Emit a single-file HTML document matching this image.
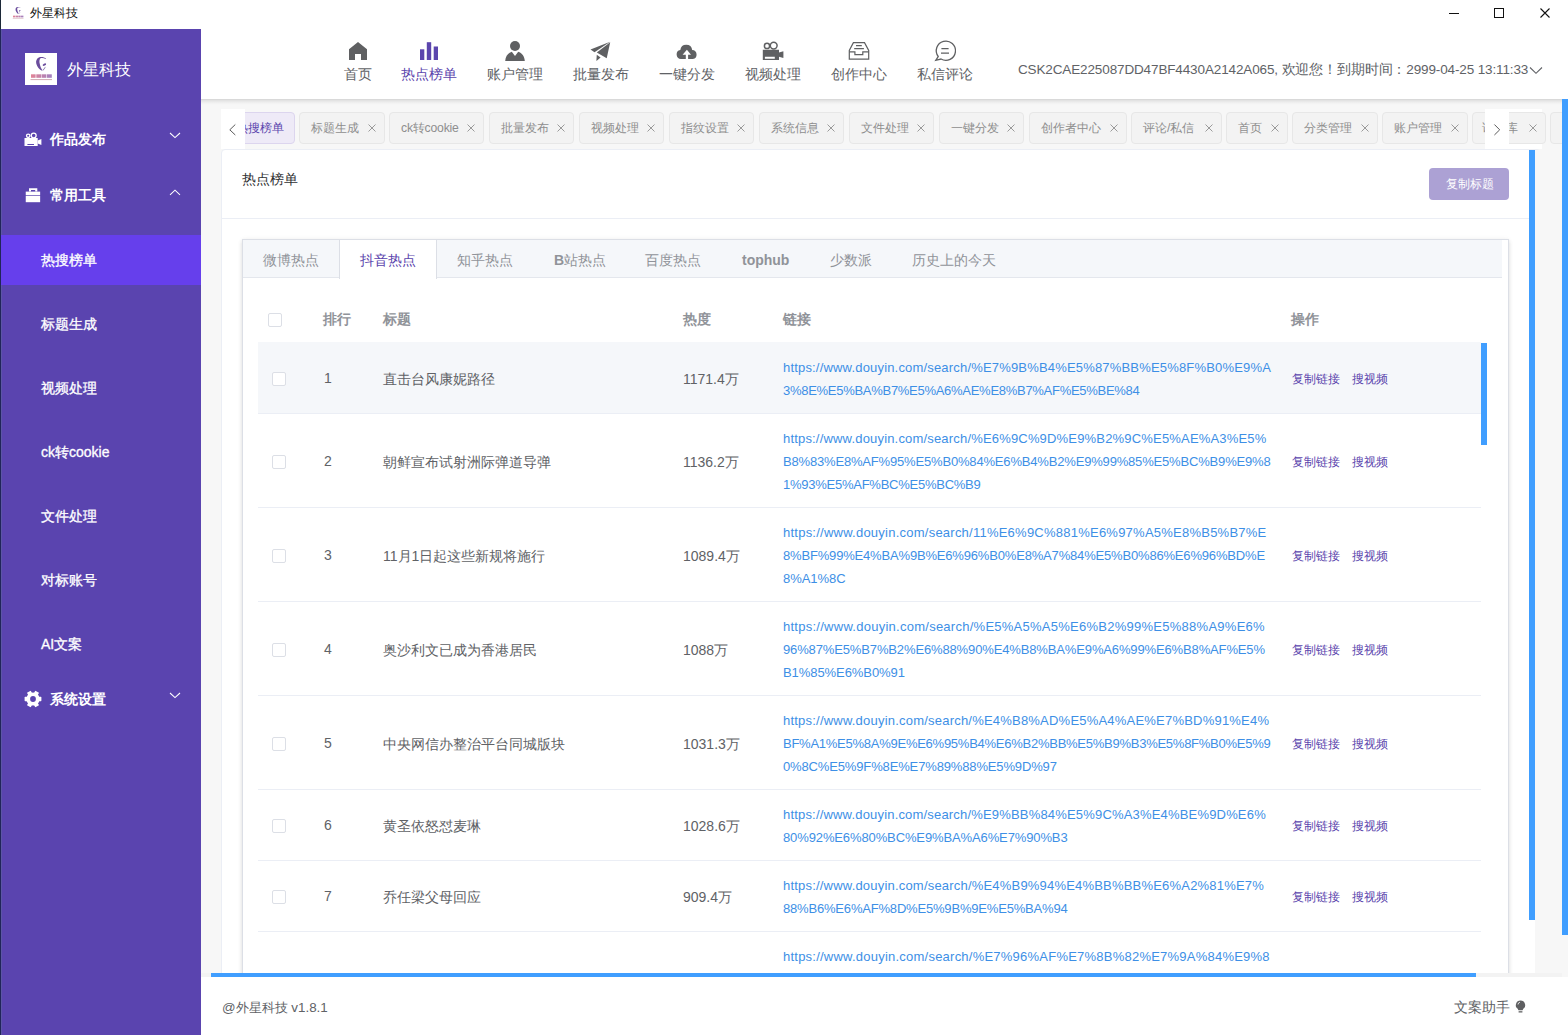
<!DOCTYPE html><html><head><meta charset="utf-8"><style>*{box-sizing:border-box;margin:0;padding:0}
html,body{width:1568px;height:1035px;overflow:hidden;background:#f7f7f7;font-family:"Liberation Sans",sans-serif;position:relative}
.a{position:absolute;white-space:nowrap}
.t12{font-size:12px}
#titlebar{left:0;top:0;width:1568px;height:29px;background:#fff}
#winborder{left:0;top:0;width:1px;height:29px;background:#1c2838}
#sidebar{left:1px;top:29px;width:200px;height:1006px;background:#5a44af}
#header{left:201px;top:29px;width:1367px;height:70px;background:#fff;box-shadow:none}
#footer{left:201px;top:977px;width:1367px;height:58px;background:#fff}
.side-t{color:#fff;font-size:14px;font-weight:bold;line-height:20px}
.side-s{color:#fff;font-size:14px;line-height:20px;font-weight:400;-webkit-text-stroke:0.3px #fff}
.nav{font-size:14px;line-height:20px;text-align:center;width:100px}
#userinfo{left:1018px;top:60px;font-size:13.5px;line-height:20px;color:#606266;letter-spacing:-0.13px}
.chip{top:112px;height:32px;background:#f3f3f3;border:1px solid #e7e7e7;border-radius:4px;font-size:12.2px;line-height:31px;color:#8e8e8e;padding-left:11px}
.chip.act{background:#eeeaf7;border-color:#dcd5ee;color:#5b45ad;padding-left:13px}
.chip .x{position:absolute;right:8px;top:11px}
#card{left:221px;top:149px;width:1320px;height:900px;background:#fff;border:1px solid #ebeef5;border-radius:4px}
#btn{left:1429px;top:168px;width:80px;height:32px;background:#aca1d4;border-radius:4px;color:#fff;font-size:12.2px;text-indent:1px;line-height:32px;text-align:center}
#tabs{left:242px;top:239px;width:1267px;height:800px;background:#fff;border:1px solid #dcdfe6;box-shadow:0 2px 4px rgba(0,0,0,.12),0 0 6px rgba(0,0,0,.04)}
.tab{top:250px;font-size:14px;line-height:20px}
.th{top:309px;font-size:14px;line-height:20px;font-weight:bold;color:#909399}
.td{font-size:14px;line-height:20px;color:#606266}
.link{font-size:13px;line-height:20px;color:#3d8fe6}
.op{font-size:12px;line-height:20px;color:#5b45ad}
.cb{width:14px;height:14px;border:1px solid #dcdfe6;border-radius:2px;background:#fff}
.sb{background:#409eff}
</style></head><body>
<div class="a" id="titlebar"></div>
<svg class="a" style="left:9.6px;top:5.4px" width="16" height="16" viewBox="0 0 32 32">
<defs><linearGradient id="lg2" gradientUnits="userSpaceOnUse" x1="6" y1="0" x2="27" y2="0"><stop offset="0" stop-color="#d5506a"/><stop offset="1" stop-color="#7a4aa5"/></linearGradient></defs>
<path d="M14.3 4.2 C17 3.6 19.5 4.2 21.2 5.8 L20.6 6 C18.8 5 16.5 4.8 15.2 5.5 C14.2 6.8 14.3 9 14.8 11 C15.3 13.3 16 15.3 17 16.4 L16.8 17.8 C14.3 16.5 12.2 13.8 11.3 10.8 C10.6 8 11.6 5.3 14.3 4.2 Z" fill="#6a4c9c"/>
<path d="M20.6 13.9 C20 15.6 18.9 17 17.5 17.7 L17.3 17.2 C18.5 16.3 19.5 15.1 20.1 13.8 Z" fill="#8a78b0"/>
<ellipse cx="19.4" cy="11.6" rx="1.9" ry="1" transform="rotate(-28 19.4 11.6)" fill="#6a4c9c"/>
<rect x="6" y="21.3" width="4.6" height="3.5" fill="url(#lg2)" opacity=".7"/><rect x="11.3" y="21.3" width="4.8" height="3.5" fill="url(#lg2)" opacity=".7"/><rect x="16.6" y="21.3" width="4.8" height="3.5" fill="url(#lg2)" opacity=".7"/><rect x="22" y="21.3" width="4.8" height="3.5" fill="url(#lg2)" opacity=".7"/>
<rect x="5.5" y="26" width="21.5" height="1.1" fill="#b07080" opacity=".55"/></svg>
<div class="a t12" style="left:30px;top:3px;color:#111;line-height:20px">外星科技</div>
<div class="a" style="left:1449px;top:13px;width:10px;height:1px;background:#111"></div>
<div class="a" style="left:1494px;top:8px;width:10px;height:10px;border:1px solid #111"></div>
<svg class="a" style="left:1539px;top:7px" width="13" height="13" viewBox="0 0 13 13"><path d="M1.5 1.5L10.5 10.5M10.5 1.5L1.5 10.5" stroke="#111" stroke-width="1.1"/></svg>
<div class="a" id="sidebar"></div>
<div class="a" id="winborder"></div>
<div class="a" style="left:0;top:29px;width:1px;height:1006px;background:#212559"></div>
<div class="a" style="left:1px;top:29px;width:1px;height:1006px;background:#5c56a6"></div>
<div class="a" style="left:25px;top:53px;width:32px;height:32px;background:#fff"></div>
<svg class="a" style="left:25px;top:53px" width="32" height="32" viewBox="0 0 32 32">
<defs><linearGradient id="lg" gradientUnits="userSpaceOnUse" x1="6" y1="0" x2="27" y2="0"><stop offset="0" stop-color="#d5506a"/><stop offset="1" stop-color="#7a4aa5"/></linearGradient></defs>
<path d="M14.3 4.2 C17 3.6 19.5 4.2 21.2 5.8 L20.6 6 C18.8 5 16.5 4.8 15.2 5.5 C14.2 6.8 14.3 9 14.8 11 C15.3 13.3 16 15.3 17 16.4 L16.8 17.8 C14.3 16.5 12.2 13.8 11.3 10.8 C10.6 8 11.6 5.3 14.3 4.2 Z" fill="#6a4c9c"/>
<path d="M20.6 13.9 C20 15.6 18.9 17 17.5 17.7 L17.3 17.2 C18.5 16.3 19.5 15.1 20.1 13.8 Z" fill="#8a78b0"/>
<ellipse cx="19.4" cy="11.6" rx="1.9" ry="1" transform="rotate(-28 19.4 11.6)" fill="#6a4c9c"/>
<rect x="6" y="21.3" width="4.6" height="3.5" fill="url(#lg)" opacity=".7"/><rect x="11.3" y="21.3" width="4.8" height="3.5" fill="url(#lg)" opacity=".7"/><rect x="16.6" y="21.3" width="4.8" height="3.5" fill="url(#lg)" opacity=".7"/><rect x="22" y="21.3" width="4.8" height="3.5" fill="url(#lg)" opacity=".7"/>
<rect x="5.5" y="26" width="21.5" height="1.1" fill="#b07080" opacity=".55"/></svg>
<div class="a" style="left:67px;top:59px;font-size:16px;line-height:20px;color:#fff;margin-top:1px">外星科技</div>
<svg class="a" style="left:0;top:0" width="50" height="210" viewBox="0 0 50 210">
<circle cx="28.2" cy="135.8" r="1.7" fill="none" stroke="#fff" stroke-width="1.3"/><circle cx="33.7" cy="135.5" r="2.45" fill="none" stroke="#fff" stroke-width="1.3"/>
<path fill="#fff" fill-rule="evenodd" d="M24.5 138.1 H37.7 V146 H24.5 Z M27.4 144 V145 H34 V144 Z"/><path d="M37.7 140.5 L41.4 139 V145 L37.7 143.5 Z" fill="#fff"/>
<path fill="#fff" fill-rule="evenodd" d="M29 188.3 H37.3 V191.6 H35.2 V190 H31 V191.6 H29 Z"/><rect x="25.75" y="191.6" width="14.4" height="3.7" fill="#fff"/><rect x="25.75" y="196" width="14.4" height="6.2" fill="#fff"/>
</svg>
<div class="a side-t" style="left:50px;top:129px">作品发布</div>
<svg class="a" style="left:169px;top:131px" width="12" height="8" viewBox="0 0 12 8"><path d="M1 2 L6 6.6 L11 2" fill="none" stroke="#fff" stroke-width="1.05"/></svg>
<div class="a side-t" style="left:50px;top:185px">常用工具</div>
<svg class="a" style="left:169px;top:188px" width="12" height="8" viewBox="0 0 12 8"><path d="M1 6.8 L6 2.2 L11 6.8" fill="none" stroke="#fff" stroke-width="1.05"/></svg>
<div class="a" style="left:1px;top:235px;width:200px;height:50px;background:#663fec"></div>
<div class="a side-s" style="left:41px;top:250px">热搜榜单</div>
<div class="a side-s" style="left:41px;top:314px">标题生成</div>
<div class="a side-s" style="left:41px;top:378px">视频处理</div>
<div class="a side-s" style="left:41px;top:442px">ck转cookie</div>
<div class="a side-s" style="left:41px;top:506px">文件处理</div>
<div class="a side-s" style="left:41px;top:570px">对标账号</div>
<div class="a side-s" style="left:41px;top:634px">AI文案</div>
<svg class="a" style="left:23px;top:689px" width="20" height="20" viewBox="-10 -10 20 20"><g transform="translate(0 0)" fill="#fff">
<circle r="6.6"/><rect x="-8.4" y="-2.2" width="16.8" height="4.4" rx="0.6"/><rect x="-8.4" y="-2.2" width="16.8" height="4.4" rx="0.6" transform="rotate(60)"/><rect x="-8.4" y="-2.2" width="16.8" height="4.4" rx="0.6" transform="rotate(120)"/></g>
<circle r="2.9" fill="#5a44af"/></svg>
<div class="a side-t" style="left:50px;top:689px">系统设置</div>
<svg class="a" style="left:169px;top:691px" width="12" height="8" viewBox="0 0 12 8"><path d="M1 2 L6 6.6 L11 2" fill="none" stroke="#fff" stroke-width="1.05"/></svg>
<div class="a" id="header"></div>
<div class="a" style="left:201px;top:99px;width:1367px;height:6px;background:linear-gradient(to bottom,rgba(0,0,0,.14),rgba(0,0,0,.07) 30%,rgba(0,0,0,.02) 70%,rgba(0,0,0,0))"></div>
<svg class="a" style="left:0;top:0" width="1000" height="70"><path d="M349 49.3 L358 42 L367 49.3 V60 H361 V54 H355 V60 H349 Z" fill="#5f6062"/><rect x="420" y="49.3" width="4.3" height="10.7" fill="#5b45ad"/><rect x="426.8" y="42.2" width="4.4" height="17.8" fill="#5b45ad"/><rect x="433.7" y="46.5" width="4.3" height="13.5" fill="#5b45ad"/><circle cx="515" cy="46" r="5" fill="#5f6062"/><path d="M505.2 61 C505.5 56 508 53 511.8 51.7 L515 56 L518.2 51.7 C522 53 524.5 56 524.8 61 Z" fill="#5f6062"/><path d="M590.5 49.4 L610.2 41.8 L594.5 52.2 Z" fill="#5f6062"/><path d="M596.8 52.4 L610.2 42.3 L606.7 58.2 Z" fill="#5f6062"/><path d="M596.8 54.7 L600.6 57.4 L596.4 61 Z" fill="#5f6062"/><path fill="#5f6062" d="M685.8 59 H681 A4.6 4.6 0 0 1 680.3 49.9 A6 6 0 0 1 692.2 49.9 A4.6 4.6 0 0 1 692.9 59 H688.1 V54.7 H691 L686.9 49.8 L682.6 54.7 H685.8 Z"/><circle cx="767" cy="45.9" r="2.6" fill="none" stroke="#5f6062" stroke-width="1.5"/><circle cx="773.7" cy="45.6" r="3.4" fill="none" stroke="#5f6062" stroke-width="1.5"/><path fill="#5f6062" fill-rule="evenodd" d="M762.8 49.8 H779 V60 H762.8 Z M764.9 56.8 V58.8 H774.8 V56.8 Z"/><path d="M779 52.4 L783.4 51.3 V58 L779 56.7 Z" fill="#5f6062"/><g fill="none" stroke="#5f6062" stroke-width="1.2"><path d="M853.4 42.6 H864.5 L868.7 50.5 V59.2 H849.3 V50.5 Z"/><path d="M849.3 51.8 H854.9 V54.7 H862.8 V51.8 H868.7"/><path d="M856 45.7 H861.8 M854.2 48.6 H863.9"/></g><g fill="none" stroke="#5f6062" stroke-width="1.3"><path d="M938.2 56.5 A9.6 9.6 0 1 1 941 59 L935.8 60.3 Z"/><path d="M941.4 48.6 H948.6 M941 53.2 H949"/></g></svg>
<div class="a nav" style="left:308px;top:64px;color:#606266">首页</div>
<div class="a nav" style="left:379px;top:64px;color:#5b45ad">热点榜单</div>
<div class="a nav" style="left:465px;top:64px;color:#606266">账户管理</div>
<div class="a nav" style="left:551px;top:64px;color:#606266">批量发布</div>
<div class="a nav" style="left:637px;top:64px;color:#606266">一键分发</div>
<div class="a nav" style="left:723px;top:64px;color:#606266">视频处理</div>
<div class="a nav" style="left:809px;top:64px;color:#606266">创作中心</div>
<div class="a nav" style="left:895px;top:64px;color:#606266">私信评论</div>
<div class="a" id="userinfo">CSK2CAE225087DD47BF4430A2142A065, 欢迎您！到期时间：2999-04-25 13:11:33</div>
<svg class="a" style="left:1529px;top:66px" width="14" height="9" viewBox="0 0 14 9"><path d="M1 1.5 L7 7.3 L13 1.5" fill="none" stroke="#606266" stroke-width="1.1"/></svg>
<div class="a" style="left:1485px;top:109px;width:57px;height:40px;background:#fff"></div>
<div class="a chip act" style="left:222px;width:73px"><span style="">热搜榜单</span></div>
<div class="a chip" style="left:299px;width:86px"><span style="">标题生成</span><svg class="x" width="8" height="8" viewBox="0 0 8 8"><path d="M0.5 0.5L7.5 7.5M7.5 0.5L0.5 7.5" stroke="#9a9a9a" stroke-width="1"/></svg></div>
<div class="a chip" style="left:389px;width:95px"><span style="letter-spacing:-0.2px">ck转cookie</span><svg class="x" width="8" height="8" viewBox="0 0 8 8"><path d="M0.5 0.5L7.5 7.5M7.5 0.5L0.5 7.5" stroke="#9a9a9a" stroke-width="1"/></svg></div>
<div class="a chip" style="left:489px;width:85px"><span style="">批量发布</span><svg class="x" width="8" height="8" viewBox="0 0 8 8"><path d="M0.5 0.5L7.5 7.5M7.5 0.5L0.5 7.5" stroke="#9a9a9a" stroke-width="1"/></svg></div>
<div class="a chip" style="left:579px;width:85px"><span style="">视频处理</span><svg class="x" width="8" height="8" viewBox="0 0 8 8"><path d="M0.5 0.5L7.5 7.5M7.5 0.5L0.5 7.5" stroke="#9a9a9a" stroke-width="1"/></svg></div>
<div class="a chip" style="left:669px;width:85px"><span style="">指纹设置</span><svg class="x" width="8" height="8" viewBox="0 0 8 8"><path d="M0.5 0.5L7.5 7.5M7.5 0.5L0.5 7.5" stroke="#9a9a9a" stroke-width="1"/></svg></div>
<div class="a chip" style="left:759px;width:85px"><span style="">系统信息</span><svg class="x" width="8" height="8" viewBox="0 0 8 8"><path d="M0.5 0.5L7.5 7.5M7.5 0.5L0.5 7.5" stroke="#9a9a9a" stroke-width="1"/></svg></div>
<div class="a chip" style="left:849px;width:85px"><span style="">文件处理</span><svg class="x" width="8" height="8" viewBox="0 0 8 8"><path d="M0.5 0.5L7.5 7.5M7.5 0.5L0.5 7.5" stroke="#9a9a9a" stroke-width="1"/></svg></div>
<div class="a chip" style="left:939px;width:85px"><span style="">一键分发</span><svg class="x" width="8" height="8" viewBox="0 0 8 8"><path d="M0.5 0.5L7.5 7.5M7.5 0.5L0.5 7.5" stroke="#9a9a9a" stroke-width="1"/></svg></div>
<div class="a chip" style="left:1029px;width:98px"><span style="">创作者中心</span><svg class="x" width="8" height="8" viewBox="0 0 8 8"><path d="M0.5 0.5L7.5 7.5M7.5 0.5L0.5 7.5" stroke="#9a9a9a" stroke-width="1"/></svg></div>
<div class="a chip" style="left:1131px;width:91px"><span style="">评论/私信</span><svg class="x" width="8" height="8" viewBox="0 0 8 8"><path d="M0.5 0.5L7.5 7.5M7.5 0.5L0.5 7.5" stroke="#9a9a9a" stroke-width="1"/></svg></div>
<div class="a chip" style="left:1226px;width:62px"><span style="">首页</span><svg class="x" width="8" height="8" viewBox="0 0 8 8"><path d="M0.5 0.5L7.5 7.5M7.5 0.5L0.5 7.5" stroke="#9a9a9a" stroke-width="1"/></svg></div>
<div class="a chip" style="left:1292px;width:86px"><span style="">分类管理</span><svg class="x" width="8" height="8" viewBox="0 0 8 8"><path d="M0.5 0.5L7.5 7.5M7.5 0.5L0.5 7.5" stroke="#9a9a9a" stroke-width="1"/></svg></div>
<div class="a chip" style="left:1382px;width:86px"><span style="">账户管理</span><svg class="x" width="8" height="8" viewBox="0 0 8 8"><path d="M0.5 0.5L7.5 7.5M7.5 0.5L0.5 7.5" stroke="#9a9a9a" stroke-width="1"/></svg></div>
<div class="a chip" style="left:1472px;width:74px"><span style="margin-left:-2px">话术库</span><svg class="x" width="8" height="8" viewBox="0 0 8 8"><path d="M0.5 0.5L7.5 7.5M7.5 0.5L0.5 7.5" stroke="#9a9a9a" stroke-width="1"/></svg></div>
<div class="a chip" style="left:1550px;width:73px"><span style="">素材库</span><svg class="x" width="8" height="8" viewBox="0 0 8 8"><path d="M0.5 0.5L7.5 7.5M7.5 0.5L0.5 7.5" stroke="#9a9a9a" stroke-width="1"/></svg></div>
<div class="a" style="left:221px;top:109px;width:24px;height:40px;background:#fff"></div>
<svg class="a" style="left:227px;top:123px" width="10" height="14" viewBox="0 0 10 14"><path d="M8.3 1.5 L2.8 6.8 L8.3 12" fill="none" stroke="#5a5a5a" stroke-width="1"/></svg>
<div class="a" style="left:1485px;top:109px;width:24px;height:40px;background:#fff"></div>
<svg class="a" style="left:1491px;top:123px" width="10" height="14" viewBox="0 0 10 14"><path d="M3.4 1.5 L8.7 6.8 L3.4 12" fill="none" stroke="#5a5a5a" stroke-width="1"/></svg>
<div class="a" id="card"></div>
<div class="a" style="left:242px;top:169px;font-size:14px;line-height:20px;color:#303133">热点榜单</div>
<div class="a" style="left:222px;top:218px;width:1307px;height:1px;background:#ebeef5"></div>
<div class="a" id="btn">复制标题</div>
<div class="a" id="tabs"></div>
<div class="a" style="left:243px;top:240px;width:1259px;height:38px;background:#f5f7fa;border-bottom:1px solid #e4e7ed"></div>
<div class="a tab" style="left:263px;color:#909399;font-weight:normal">微博热点</div>
<div class="a" style="left:339px;top:240px;width:98px;height:39px;background:#fff;border-left:1px solid #dcdfe6;border-right:1px solid #dcdfe6"></div>
<div class="a tab" style="left:360px;color:#5b45ad;font-weight:normal">抖音热点</div>
<div class="a tab" style="left:457px;color:#909399;font-weight:normal">知乎热点</div>
<div class="a tab" style="left:554px;color:#909399;font-weight:normal"><b>B</b>站热点</div>
<div class="a tab" style="left:645px;color:#909399;font-weight:normal">百度热点</div>
<div class="a tab" style="left:742px;color:#909399;font-weight:bold">tophub</div>
<div class="a tab" style="left:830px;color:#909399;font-weight:normal">少数派</div>
<div class="a tab" style="left:912px;color:#909399;font-weight:normal">历史上的今天</div>
<div class="a cb" style="left:268px;top:313px"></div>
<div class="a th" style="left:323px">排行</div>
<div class="a th" style="left:383px">标题</div>
<div class="a th" style="left:683px">热度</div>
<div class="a th" style="left:783px">链接</div>
<div class="a th" style="left:1291px">操作</div>
<div class="a" style="left:258px;top:342px;width:1223px;height:71px;background:#f5f7fa"></div>
<div class="a" style="left:258px;top:413px;width:1223px;height:1px;background:#ebeef5"></div>
<div class="a link" style="left:783px;top:358px;margin-top:0px;letter-spacing:0.179px">https://www.douyin.com/search/%E7%9B%B4%E5%87%BB%E5%8F%B0%E9%A</div>
<div class="a link" style="left:783px;top:358px;margin-top:23px;letter-spacing:-0.283px">3%8E%E5%BA%B7%E5%A6%AE%E8%B7%AF%E5%BE%84</div>
<div class="a cb" style="left:272px;top:372px"></div>
<div class="a td" style="left:324px;top:368px">1</div>
<div class="a td" style="left:383px;top:369px">直击台风康妮路径</div>
<div class="a td" style="left:683px;top:369px">1171.4万</div>
<div class="a op" style="left:1292px;top:369px">复制链接</div>
<div class="a op" style="left:1352px;top:369px">搜视频</div>
<div class="a" style="left:258px;top:507px;width:1223px;height:1px;background:#ebeef5"></div>
<div class="a link" style="left:783px;top:429px;margin-top:0px;letter-spacing:0.179px">https://www.douyin.com/search/%E6%9C%9D%E9%B2%9C%E5%AE%A3%E5%</div>
<div class="a link" style="left:783px;top:429px;margin-top:23px;letter-spacing:-0.176px">B8%83%E8%AF%95%E5%B0%84%E6%B4%B2%E9%99%85%E5%BC%B9%E9%8</div>
<div class="a link" style="left:783px;top:429px;margin-top:46px;letter-spacing:-0.252px">1%93%E5%AF%BC%E5%BC%B9</div>
<div class="a cb" style="left:272px;top:455px"></div>
<div class="a td" style="left:324px;top:451px">2</div>
<div class="a td" style="left:383px;top:452px">朝鲜宣布试射洲际弹道导弹</div>
<div class="a td" style="left:683px;top:452px">1136.2万</div>
<div class="a op" style="left:1292px;top:452px">复制链接</div>
<div class="a op" style="left:1352px;top:452px">搜视频</div>
<div class="a" style="left:258px;top:601px;width:1223px;height:1px;background:#ebeef5"></div>
<div class="a link" style="left:783px;top:523px;margin-top:0px;letter-spacing:0.238px">https://www.douyin.com/search/11%E6%9C%881%E6%97%A5%E8%B5%B7%E</div>
<div class="a link" style="left:783px;top:523px;margin-top:23px;letter-spacing:-0.176px">8%BF%99%E4%BA%9B%E6%96%B0%E8%A7%84%E5%B0%86%E6%96%BD%E</div>
<div class="a link" style="left:783px;top:523px;margin-top:46px;letter-spacing:-0.054px">8%A1%8C</div>
<div class="a cb" style="left:272px;top:549px"></div>
<div class="a td" style="left:324px;top:545px">3</div>
<div class="a td" style="left:383px;top:546px">11月1日起这些新规将施行</div>
<div class="a td" style="left:683px;top:546px">1089.4万</div>
<div class="a op" style="left:1292px;top:546px">复制链接</div>
<div class="a op" style="left:1352px;top:546px">搜视频</div>
<div class="a" style="left:258px;top:695px;width:1223px;height:1px;background:#ebeef5"></div>
<div class="a link" style="left:783px;top:617px;margin-top:0px;letter-spacing:0.259px">https://www.douyin.com/search/%E5%A5%A5%E6%B2%99%E5%88%A9%E6%</div>
<div class="a link" style="left:783px;top:617px;margin-top:23px;letter-spacing:-0.136px">96%87%E5%B7%B2%E6%88%90%E4%B8%BA%E9%A6%99%E6%B8%AF%E5%</div>
<div class="a link" style="left:783px;top:617px;margin-top:46px;letter-spacing:-0.069px">B1%85%E6%B0%91</div>
<div class="a cb" style="left:272px;top:643px"></div>
<div class="a td" style="left:324px;top:639px">4</div>
<div class="a td" style="left:383px;top:640px">奥沙利文已成为香港居民</div>
<div class="a td" style="left:683px;top:640px">1088万</div>
<div class="a op" style="left:1292px;top:640px">复制链接</div>
<div class="a op" style="left:1352px;top:640px">搜视频</div>
<div class="a" style="left:258px;top:789px;width:1223px;height:1px;background:#ebeef5"></div>
<div class="a link" style="left:783px;top:711px;margin-top:0px;letter-spacing:0.212px">https://www.douyin.com/search/%E4%B8%AD%E5%A4%AE%E7%BD%91%E4%</div>
<div class="a link" style="left:783px;top:711px;margin-top:23px;letter-spacing:-0.255px">BF%A1%E5%8A%9E%E6%95%B4%E6%B2%BB%E5%B9%B3%E5%8F%B0%E5%9</div>
<div class="a link" style="left:783px;top:711px;margin-top:46px;letter-spacing:-0.143px">0%8C%E5%9F%8E%E7%89%88%E5%9D%97</div>
<div class="a cb" style="left:272px;top:737px"></div>
<div class="a td" style="left:324px;top:733px">5</div>
<div class="a td" style="left:383px;top:734px">中央网信办整治平台同城版块</div>
<div class="a td" style="left:683px;top:734px">1031.3万</div>
<div class="a op" style="left:1292px;top:734px">复制链接</div>
<div class="a op" style="left:1352px;top:734px">搜视频</div>
<div class="a" style="left:258px;top:860px;width:1223px;height:1px;background:#ebeef5"></div>
<div class="a link" style="left:783px;top:805px;margin-top:0px;letter-spacing:0.181px">https://www.douyin.com/search/%E9%BB%84%E5%9C%A3%E4%BE%9D%E6%</div>
<div class="a link" style="left:783px;top:805px;margin-top:23px;letter-spacing:-0.120px">80%92%E6%80%BC%E9%BA%A6%E7%90%B3</div>
<div class="a cb" style="left:272px;top:819px"></div>
<div class="a td" style="left:324px;top:815px">6</div>
<div class="a td" style="left:383px;top:816px">黄圣依怒怼麦琳</div>
<div class="a td" style="left:683px;top:816px">1028.6万</div>
<div class="a op" style="left:1292px;top:816px">复制链接</div>
<div class="a op" style="left:1352px;top:816px">搜视频</div>
<div class="a" style="left:258px;top:931px;width:1223px;height:1px;background:#ebeef5"></div>
<div class="a link" style="left:783px;top:876px;margin-top:0px;letter-spacing:0.197px">https://www.douyin.com/search/%E4%B9%94%E4%BB%BB%E6%A2%81%E7%</div>
<div class="a link" style="left:783px;top:876px;margin-top:23px;letter-spacing:-0.188px">88%B6%E6%AF%8D%E5%9B%9E%E5%BA%94</div>
<div class="a cb" style="left:272px;top:890px"></div>
<div class="a td" style="left:324px;top:886px">7</div>
<div class="a td" style="left:383px;top:887px">乔任梁父母回应</div>
<div class="a td" style="left:683px;top:887px">909.4万</div>
<div class="a op" style="left:1292px;top:887px">复制链接</div>
<div class="a op" style="left:1352px;top:887px">搜视频</div>
<div class="a" style="left:258px;top:1030px;width:1223px;height:1px;background:#ebeef5"></div>
<div class="a link" style="left:783px;top:947px;margin-top:0px;letter-spacing:0.229px">https://www.douyin.com/search/%E7%96%AF%E7%8B%82%E7%9A%84%E9%8</div>
<div class="a sb" style="left:1481px;top:343px;width:6px;height:102px"></div>
<div class="a sb" style="left:1529px;top:150px;width:6px;height:770px"></div>
<div class="a" style="left:1535px;top:150px;width:27px;height:823px;background:#f7f7f7"></div>
<div class="a sb" style="left:1562px;top:99px;width:6px;height:836px"></div>
<div class="a" style="left:201px;top:973px;width:1361px;height:4px;background:#f3f3f3"></div>
<div class="a sb" style="left:211px;top:973px;width:1265px;height:4px"></div>
<div class="a" id="footer"></div>
<div class="a" style="left:222px;top:997px;font-size:13.4px;line-height:20px;color:#606266;margin-top:1px">@外星科技 v1.8.1</div>
<div class="a" style="left:1454px;top:997px;font-size:14px;line-height:20px;color:#606266">文案助手</div>
<svg class="a" style="left:1515px;top:1000px" width="11" height="14" viewBox="0 0 11 14"><path d="M5.5 0.5 A4.6 4.6 0 0 1 8.3 8.8 L7.6 10.3 H3.4 L2.7 8.8 A4.6 4.6 0 0 1 5.5 0.5 Z" fill="#5f6062"/><rect x="3.6" y="11.2" width="3.8" height="1.3" fill="#5f6062"/><path d="M3 4.5 A2.5 2.5 0 0 1 5 2.2" stroke="#fff" stroke-width=".8" fill="none"/></svg>
</body></html>
